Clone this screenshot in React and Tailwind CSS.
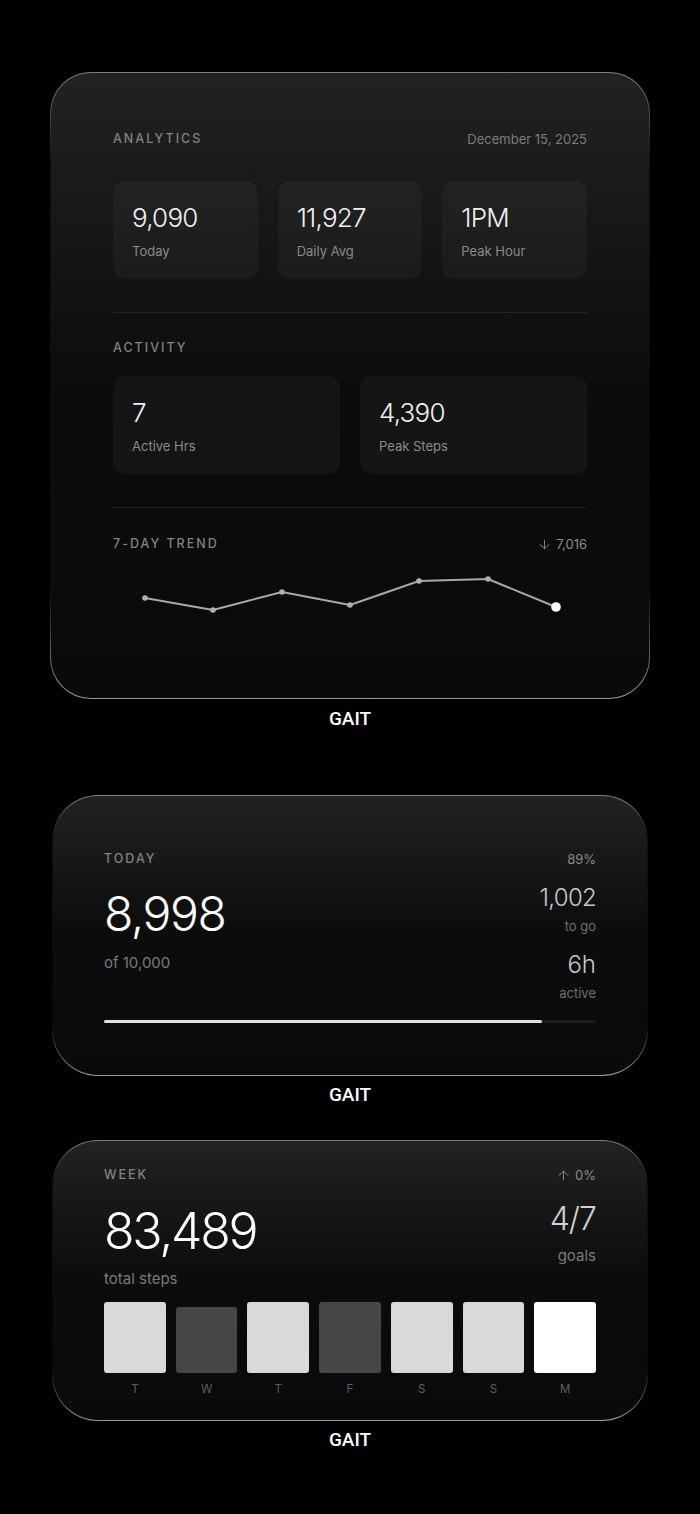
import React from "react";
import { ArrowDown, ArrowUp } from "lucide-react";

const font = { fontFamily: "Inter, 'Noto Sans', sans-serif" };

const trend = [
  [32, 37],
  [100, 49],
  [169, 31],
  [237, 44],
  [306, 20],
  [375, 18],
  [443, 46],
];

const week = [
  { day: "T", tone: "bg-[#d9d9d9]", short: false },
  { day: "W", tone: "bg-[#464646]", short: true },
  { day: "T", tone: "bg-[#d9d9d9]", short: false },
  { day: "F", tone: "bg-[#464646]", short: false },
  { day: "S", tone: "bg-[#d9d9d9]", short: false },
  { day: "S", tone: "bg-[#d9d9d9]", short: false },
  { day: "M", tone: "bg-white", short: false },
];

// glassy frame: bright rim on top and bottom, fading on the sides
const Frame = ({ width, radius, children }) => (
  <div
    className={`${width} ${radius.outer} p-px bg-[linear-gradient(to_bottom,rgba(255,255,255,0.5),rgba(255,255,255,0.06)_14%,rgba(255,255,255,0.03)_82%,rgba(255,255,255,0.6))]`}
  >
    <div
      className={`${radius.inner} bg-gradient-to-b from-[#222222] via-[#0c0c0d] to-[#0a0a0c] overflow-hidden`}
    >
      {children}
    </div>
  </div>
);

const Caption = ({ className = "" }) => (
  <div
    className={`text-[19px] leading-5 font-medium text-white ${className}`}
    style={{ fontFamily: "Roboto, 'Liberation Sans', sans-serif" }}
  >
    GAIT
  </div>
);

const StatBox = ({ value, label }) => (
  <div className="rounded-xl bg-white/[0.035] pt-[21px] pb-[19px] px-[19px]">
    <div className="text-[26px] leading-8 font-light tracking-[-0.03em] text-[#f2f2f2]">{value}</div>
    <div className="mt-2 text-[13px] leading-[18px] text-[#8a8a8a]">{label}</div>
  </div>
);

const SectionTitle = ({ children }) => (
  <div className="text-[12.5px] leading-4 tracking-[0.16em] text-[#828282] font-medium">
    {children}
  </div>
);

const AnalyticsWidget = () => (
  <Frame width="w-[600px]" radius={{ outer: "rounded-[41px]", inner: "rounded-[40px]" }}>
    <div className="px-[62px] pt-[58px] pb-[57px]">
      <div className="flex items-center justify-between">
        <SectionTitle>ANALYTICS</SectionTitle>
        <div className="text-[13px] leading-4 text-[#7c7c7c]">December 15, 2025</div>
      </div>

      <div className="mt-[34px] grid grid-cols-3 gap-5">
        <StatBox value="9,090" label="Today" />
        <StatBox value="11,927" label="Daily Avg" />
        <StatBox value="1PM" label="Peak Hour" />
      </div>

      <div className="mt-[33px] h-px bg-[#262627]" />

      <div className="mt-[27px]">
        <SectionTitle>ACTIVITY</SectionTitle>
      </div>

      <div className="mt-5 grid grid-cols-2 gap-5">
        <StatBox value="7" label="Active Hrs" />
        <StatBox value="4,390" label="Peak Steps" />
      </div>

      <div className="mt-[33px] h-px bg-[#1f1f20]" />

      <div className="mt-[28px] flex items-center justify-between">
        <SectionTitle>7-DAY TREND</SectionTitle>
        <div className="flex items-center gap-1 text-[13px] leading-4 text-[#8a8a8a]">
          <ArrowDown size={15} strokeWidth={1.5} />
          <span>7,016</span>
        </div>
      </div>

      <svg className="mt-[9px] block" width="475" height="80" viewBox="0 0 475 80">
        <polyline
          points={trend.map((p) => p.join(",")).join(" ")}
          fill="none"
          stroke="#a8a8a8"
          strokeWidth="2"
          strokeLinejoin="round"
        />
        {trend.slice(0, -1).map(([x, y], i) => (
          <circle key={i} cx={x} cy={y} r="2.8" fill="#b0b0b0" />
        ))}
        <circle cx={443} cy={46} r="4.8" fill="#ffffff" />
      </svg>
    </div>
  </Frame>
);

const TodayWidget = () => (
  <Frame width="w-[596px]" radius={{ outer: "rounded-[46px]", inner: "rounded-[45px]" }}>
    <div className="px-[51px] pt-[55px] pb-[52px]">
      <div className="flex items-start justify-between">
        <div>
          <SectionTitle>TODAY</SectionTitle>
          <div className="mt-[23px] text-[48px] leading-[48px] font-light tracking-[-0.03em] text-white">8,998</div>
          <div className="mt-[14px] text-[15px] leading-[22px] text-[#7a7a7a]">of 10,000</div>
        </div>
        <div className="text-right">
          <div className="text-[13px] leading-4 text-[#8a8a8a]">89%</div>
          <div className="mt-4 text-[24px] leading-[30px] font-light tracking-[-0.03em] text-[#c8c8c8]">1,002</div>
          <div className="mt-[5px] text-[13px] leading-4 text-[#6e6e6e]">to go</div>
          <div className="mt-4 text-[24px] leading-[30px] font-light text-[#c8c8c8]">6h</div>
          <div className="mt-[5px] text-[13px] leading-4 text-[#6e6e6e]">active</div>
        </div>
      </div>
      <div className="mt-[19px] h-[3px] rounded-full bg-[#1c1c1e]">
        <div className="h-full rounded-full bg-[#e0e0e0]" style={{ width: "89%" }} />
      </div>
    </div>
  </Frame>
);

const WeekWidget = () => (
  <Frame width="w-[596px]" radius={{ outer: "rounded-[46px]", inner: "rounded-[45px]" }}>
    <div className="px-[51px] pt-[26px] pb-[24px]">
      <div className="flex items-start justify-between">
        <div>
          <SectionTitle>WEEK</SectionTitle>
          <div className="mt-[22px] text-[50px] leading-[52px] font-light tracking-[-0.045em] text-white">83,489</div>
          <div className="mt-[11px] text-[15px] leading-[22px] text-[#7a7a7a]">total steps</div>
        </div>
        <div className="text-right">
          <div className="flex items-center justify-end gap-1 text-[13px] leading-4 text-[#8a8a8a]">
            <ArrowUp size={15} strokeWidth={1.5} />
            <span>0%</span>
          </div>
          <div className="mt-[18px] text-[32px] leading-9 font-light tracking-[-0.03em] text-[#d0d0d0]">4/7</div>
          <div className="mt-2 text-[15px] leading-[22px] text-[#7a7a7a]">goals</div>
        </div>
      </div>
      <div className="mt-3 grid grid-cols-7 gap-[10px]">
        {week.map((d, i) => (
          <div key={i} className="flex flex-col items-center">
            <div className="flex h-[71px] w-full items-end">
              <div className={`w-full rounded-[3px] ${d.tone} ${d.short ? "h-[66px]" : "h-[71px]"}`} />
            </div>
            <div className="mt-[9px] text-[11.5px] leading-[14px] text-[#5e5e5e]">{d.day}</div>
          </div>
        ))}
      </div>
    </div>
  </Frame>
);

export default function App() {
  return (
    <div className="min-h-screen bg-black flex flex-col items-center pt-[72px] pb-10" style={font}>
      <AnalyticsWidget />
      <Caption className="mt-[10px]" />
      <div className="mt-[66px]">
        <TodayWidget />
      </div>
      <Caption className="mt-[9px]" />
      <div className="mt-[35px]">
        <WeekWidget />
      </div>
      <Caption className="mt-[9px]" />
    </div>
  );
}
